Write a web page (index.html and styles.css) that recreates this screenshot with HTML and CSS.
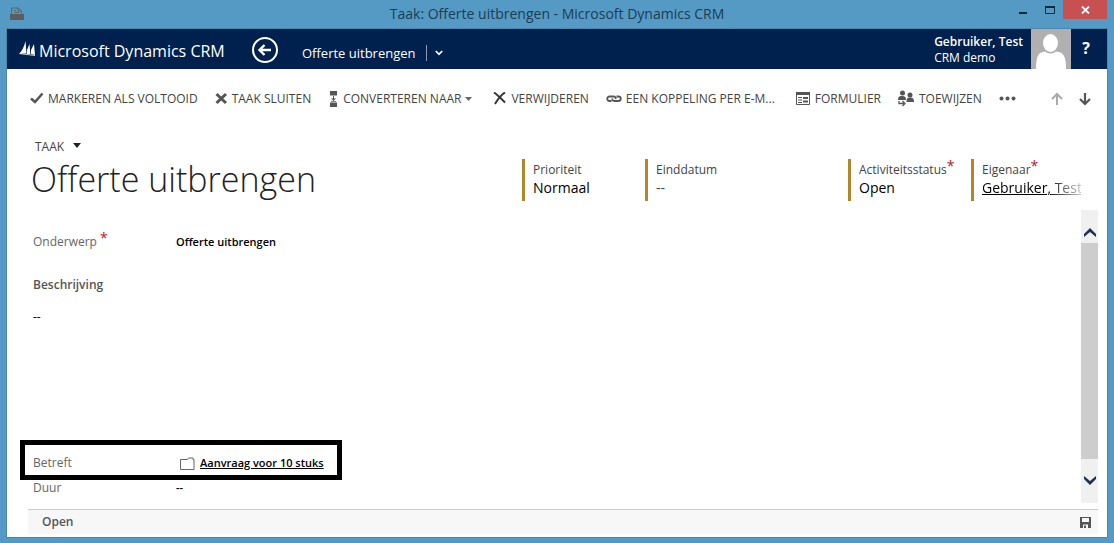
FILE: index.html
```html
<!DOCTYPE html>
<html lang="nl">
<head>
<meta charset="utf-8">
<title>Taak: Offerte uitbrengen - Microsoft Dynamics CRM</title>
<link rel="stylesheet" href="styles.css">
</head>
<body>
<header class="titlebar">
  <svg class="app-icon" width="16" height="14" viewBox="0 0 16 14"><path d="M2.5 7V1h7l3 3v3M9 1v3h3M5 3.500h2M5 5.500h5" fill="none" stroke="#5d656b"/><path d="M1 7h14v6H1z" fill="#5d5d5f"/></svg>
  <div class="window-title">Taak: Offerte uitbrengen - Microsoft Dynamics CRM</div>
  <div class="window-buttons">
    <button class="win-btn" aria-label="Minimaliseren"><svg width="10" height="12" viewBox="0 0 10 12"><path d="M1 8h8v2H1z" fill="#12293c"/></svg></button>
    <button class="win-btn" aria-label="Maximaliseren"><svg width="10" height="8" viewBox="0 0 10 8"><path d="M.5 1v6.500h9V1" fill="none" stroke="#12293c"/><path d="M0 0h10v2H0z" fill="#12293c"/></svg></button>
    <button class="win-btn win-close" aria-label="Sluiten"><svg width="9" height="8" viewBox="0 0 9 8"><path d="M1 .5l7 7M8 .5l-7 7" stroke="#fff" stroke-width="1.800"/></svg></button>
  </div>
</header>
<div class="window">
  <nav class="navbar">
    <svg class="logo" width="17" height="16" viewBox="0 0 17 16"><path d="M0 13C3 10 5 6 6.500 0l1 12.500zM8 13V9l2.500-6 .8 10zM12 13V9l3-6 1 11z" fill="#fff"/><path d="M0 14l8-1 8 1v1l-8-1z" fill="#cdd3de"/></svg>
    <span class="brand">Microsoft Dynamics CRM</span>
    <button class="back" aria-label="Terug"><svg width="28" height="28" viewBox="0 0 28 28" fill="none" stroke="#fff"><circle cx="14" cy="15" r="12" stroke-width="2"/><path d="M8.500 15H20M13.500 10l-5 5 5 5" stroke-width="2.400"/></svg></button>
    <span class="crumb">Offerte uitbrengen</span>
    <button class="crumb-menu" aria-label="Meer"><svg width="8" height="6" viewBox="0 0 8 6"><path d="M.8 1L4 4.300 7.200 1" fill="none" stroke="#fff" stroke-width="1.700"/></svg></button>
    <div class="user"><strong>Gebruiker, Test</strong><span>CRM demo</span></div>
    <svg class="avatar" width="40" height="40" viewBox="0 0 40 40"><path d="M0 0h40v40H0z" fill="#b0b0b0"/><path d="M5 40C5 28 7 23 14 22.500h11C33 23 35 28 35 40z" fill="#fff"/><ellipse cx="19.500" cy="14" rx="9" ry="10.500" fill="#b0b0b0"/><ellipse cx="19.500" cy="14" rx="7.500" ry="9" fill="#fff"/></svg>
    <button class="help">?</button>
  </nav>
  <div class="toolbar">
    <button class="tool"><svg width="14" height="14" viewBox="0 0 14 14"><path d="M1 6.500l4 3.500L12.500 1.500" fill="none" stroke="#555" stroke-width="2.500"/></svg>MARKEREN ALS VOLTOOID</button>
    <button class="tool"><svg width="13" height="14" viewBox="0 0 13 14"><path d="M1.500 2l9.500 9M11 2L1.500 11" fill="none" stroke="#555" stroke-width="3"/></svg>TAAK SLUITEN</button>
    <button class="tool"><svg width="11" height="16" viewBox="0 0 11 16" fill="#555"><path d="M2 0h7v4.500H2zM2 11.500h7V16H2zM5 5h1v2.500h2L5.500 10 3 7.500h2zM3 10h5v.8H3z"/></svg>CONVERTEREN NAAR<svg class="caret" width="7" height="4" viewBox="0 0 7 4"><path d="M0 0h7L3.500 4z" fill="#666"/></svg></button>
    <button class="tool wide"><svg width="14" height="14" viewBox="0 0 14 14"><path d="M1 .5c3 2 7 6 11 10M12 .5C8 3 5 7 2 12" fill="none" stroke="#333" stroke-width="2"/></svg>VERWIJDEREN</button>
    <button class="tool"><svg width="16" height="10" viewBox="0 0 16 10" fill="none" stroke="#555" stroke-width="1.800"><path d="M5.500 7H3.500a2.200 2.200 0 010-4.500H7.500c1.800 0 2.500 1.200 2 2.500M10.500 2.500h2a2.200 2.200 0 010 4.500H8.500C6.700 7 6 6 6.500 4.500"/></svg>EEN KOPPELING PER E-M...</button>
    <button class="tool wide"><svg width="15" height="14" viewBox="0 0 15 14"><path d="M.5.5h13v12H.5z" fill="none" stroke="#555"/><path d="M0 0h14v3H0zM2 5h4v1H2zM2 7.500h4v1H2zM2 10h4v1H2zM7 5h5v2H7zM7 8.500h5v2H7z" fill="#555"/></svg>FORMULIER</button>
    <button class="tool"><svg width="17" height="17" viewBox="0 0 17 17" fill="#555"><circle cx="4.500" cy="3" r="2.500"/><path d="M0 10C0 6 2 6 4.500 6S8 7 8 10z"/><circle cx="12" cy="5" r="2.500"/><path d="M8.500 12c0-4 1.500-4.500 3.500-4.500s4 .5 4 4.500z"/><path d="M1 11v2.500h5M4.500 11l2.500 2.500L4.500 16" fill="none" stroke="#555" stroke-width="1.300"/></svg>TOEWIJZEN</button>
    <button class="tool" aria-label="Meer opdrachten"><svg width="17" height="5" viewBox="0 0 17 5" fill="#555"><circle cx="2.500" cy="2.500" r="2"/><circle cx="8.500" cy="2.500" r="2"/><circle cx="14.500" cy="2.500" r="2"/></svg></button>
    <div class="record-nav">
      <button class="tool" aria-label="Vorige"><svg width="12" height="14" viewBox="0 0 12 14" fill="none" stroke="#aaa" stroke-width="2"><path d="M6 13V2M1 7l5-5 5 5"/></svg></button>
      <button class="tool" aria-label="Volgende"><svg width="12" height="14" viewBox="0 0 12 14" fill="none" stroke="#555" stroke-width="2.200"><path d="M6 1v11M1 7l5 5 5-5"/></svg></button>
    </div>
  </div>
  <section class="record-head">
    <div class="record-name">
      <button class="record-type">TAAK<svg width="8" height="8" viewBox="0 0 8 8"><path d="M0 0h8L4 5z" fill="#222"/></svg></button>
      <h1>Offerte uitbrengen</h1>
    </div>
    <dl class="summary">
      <div class="fact"><dt>Prioriteit</dt><dd>Normaal</dd></div>
      <div class="fact fact-date"><dt>Einddatum</dt><dd class="empty">--</dd></div>
      <div class="fact"><dt>Activiteitsstatus<span class="req">*</span></dt><dd>Open</dd></div>
      <div class="fact fact-owner"><dt>Eigenaar<span class="req">*</span></dt><dd class="fade"><a href="#">Gebruiker, Test</a></dd></div>
    </dl>
  </section>
  <main class="form-area">
    <div class="form">
      <div class="row"><span class="label">Onderwerp <span class="req">*</span></span><span class="value">Offerte uitbrengen</span></div>
      <h2>Beschrijving</h2>
      <div class="description">--</div>
      <div class="row marked"><span class="label">Betreft</span><svg width="15" height="13" viewBox="0 0 15 13"><path d="M.5 2.500h7l1-1.500h4.500v1.500h1v10H.5z" fill="none" stroke="#666"/></svg><a class="value" href="#">Aanvraag voor 10 stuks</a></div>
      <div class="row last"><span class="label">Duur</span><span class="value">--</span></div>
    </div>
    <div class="scrollbar">
      <button aria-label="Omhoog"><svg width="12" height="10" viewBox="0 0 12 10"><path d="M0 7l6-6 6 6v3L6 5 0 10z" fill="#1f3350"/></svg></button>
      <div class="thumb"></div>
      <button class="down" aria-label="Omlaag"><svg width="12" height="10" viewBox="0 0 12 10"><path d="M0 3l6 6 6-6V0L6 5 0 0z" fill="#1f3350"/></svg></button>
    </div>
  </main>
  <footer class="statusbar">
    <span>Open</span>
    <button aria-label="Opslaan"><svg width="12" height="11" viewBox="0 0 12 11"><path d="M0 0h11v11H0z" fill="#555"/><path d="M2 1h7v4H2zM3 7.500h5V11H3z" fill="#f7f7f7"/><path d="M4 8.500h2V11H4z" fill="#555"/></svg></button>
  </footer>
</div>
</body>
</html>
```
FILE: styles.css
```css
* { box-sizing: border-box; }
body {
  margin: 0;
  min-height: 100vh;
  display: flex;
  flex-direction: column;
  padding: 0 7px 6px 7px;
  background: #559ac5;
  font-family: "Open Sans", "Noto Sans", sans-serif;
  font-size: 12px;
  line-height: 16px;
  color: #000;
}
button {
  border: 0;
  padding: 0;
  background: none;
  font: inherit;
  color: inherit;
  display: flex;
  align-items: center;
}
svg { flex: none; }
a { color: inherit; }
h1, h2, dl, dd { margin: 0; }

.titlebar {
  height: 29px;
  display: grid;
  grid-template-columns: 120px 1fr 120px;
}
.app-icon { margin: 7px 0 0 2px; }
.window-title {
  text-align: center;
  font-size: 14px;
  line-height: 28px;
  color: #1b3c53;
}
.window-buttons { display: flex; justify-content: flex-end; }
.win-btn { width: 27px; height: 19px; justify-content: center; }
.win-close { width: 44px; background: #c75050; }

.window {
  flex: 1;
  display: flex;
  flex-direction: column;
  background: #fff;
  box-shadow: 0 0 0 1px #4a86ad;
}
.navbar {
  height: 40px;
  display: flex;
  align-items: center;
  background: #00204e;
  color: #fff;
}
.logo { margin: 0 3px 0 12px; }
.brand { font-size: 16px; line-height: 24px; width: 212px; padding-top: 3px; white-space: nowrap; }
.crumb {
  margin: 8px 0 0 23px;
  padding-right: 10px;
  border-right: 1px solid #8b9bb5;
  font-size: 13px;
}
.crumb-menu { margin: 8px 0 0 8px; }
.user {
  margin-left: auto;
  margin-right: 8px;
  padding-top: 2px;
  display: flex;
  flex-direction: column;
}
.user strong { font-weight: 600; }
.help { width: 36px; justify-content: center; font-size: 16px; font-weight: 700; padding: 0 6px 2px 0; }

.toolbar {
  height: 58px;
  display: flex;
  align-items: center;
  gap: 17px;
  padding: 1px 16px 0 23px;
  color: #444;
  white-space: nowrap;
}
.tool { gap: 4px; }
.tool.wide { margin-left: 4px; }
.record-nav { display: flex; gap: 16px; margin-left: auto; }

.record-head { height: 83px; display: flex; padding: 0 26px 0 24px; }
.record-name { flex: 1; padding: 12px 0 0 4px; }
.record-type { gap: 9px; color: #444; }
h1 {
  font-weight: 300;
  font-size: 34px;
  line-height: 48px;
  color: #222;
  margin-left: -4px;
  white-space: nowrap;
}
.summary { display: flex; padding-top: 32px; }
.fact {
  width: 123px;
  height: 42px;
  padding: 3px 0 0 8px;
  border-left: 3px solid #b5852a;
  white-space: nowrap;
}
.fact dt { color: #444; height: 16px; }
.fact dd { font-size: 14px; line-height: 20px; }
.fact dd.empty { color: #444; }
.fact-date { width: 203px; }
.fact-owner { width: 110px; }
.fade {
  overflow: hidden;
  -webkit-mask-image: linear-gradient(to right, #000 65%, transparent 110%);
  mask-image: linear-gradient(to right, #000 65%, transparent 110%);
}
.req { color: #c01525; font-size: 14px; line-height: 1px; vertical-align: 3px; }

.form-area { flex: 1; display: flex; margin-right: 9px; }
.form {
  flex: 1;
  display: flex;
  flex-direction: column;
  padding: 24px 0 7px 26px;
}
.row { display: flex; align-items: center; }
.label { width: 143px; color: #666; }
.value { font-weight: 600; font-size: 11px; color: #000; }
h2 { margin-top: 27px; font-size: 12px; line-height: 16px; font-weight: 600; color: #555; }
.description { margin-top: 16px; }
.marked {
  align-self: flex-start;
  margin: auto 0 0 -13px;
  height: 40px;
  padding: 6px 13px 0 8px;
  border: 5px solid #000;
}
.marked .label { width: 147px; }
.marked svg { margin-right: 5px; }
.scrollbar {
  width: 17px;
  display: flex;
  flex-direction: column;
  background: #f0f0f0;
}
.scrollbar button { height: 33px; padding-top: 10px; justify-content: center; }
.scrollbar .down { height: 44px; padding: 0; }
.thumb { flex: 1; background: #cdcdcd; }

.statusbar {
  margin: 6px 9px 3px 21px;
  height: 25px;
  display: flex;
  align-items: center;
  justify-content: space-between;
  padding: 0 6px 0 14px;
  border-top: 1px solid #ccc;
  background: #f7f7f7;
  font-weight: 600;
  color: #555;
}
```
